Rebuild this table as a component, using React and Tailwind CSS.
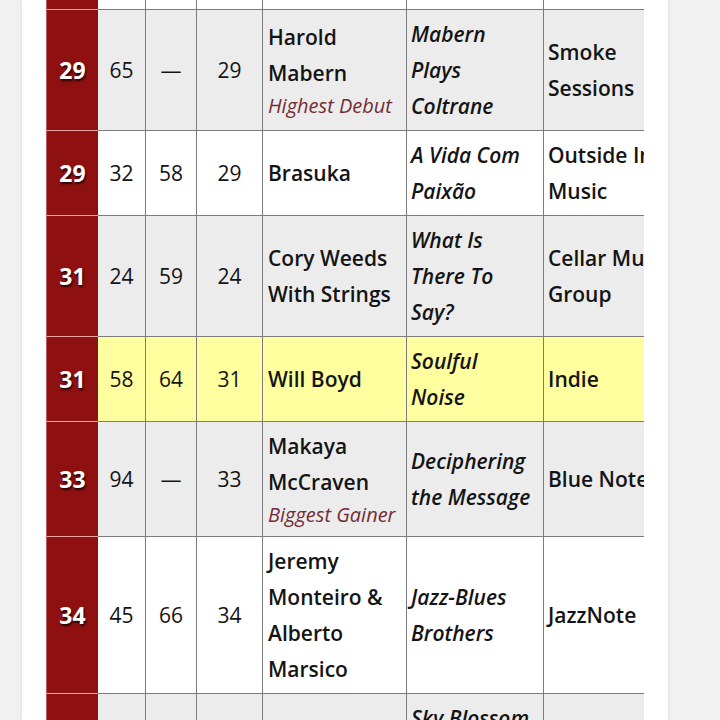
const ROWS = [
  {
    rank: '29', a: '65', b: '—', c: '29', bg: 'bg-[#ececec]',
    artist: ['Harold', 'Mabern'], note: 'Highest Debut',
    title: ['Mabern', 'Plays', 'Coltrane'],
    label: ['Smoke', 'Sessions'],
  },
  {
    rank: '29', a: '32', b: '58', c: '29', bg: 'bg-white',
    artist: ['Brasuka'],
    title: ['A Vida Com', 'Paixão'],
    label: ['Outside In', 'Music'],
  },
  {
    rank: '31', a: '24', b: '59', c: '24', bg: 'bg-[#ececec]',
    artist: ['Cory Weeds', 'With Strings'],
    title: ['What Is', 'There To', 'Say?'],
    label: ['Cellar Music', 'Group'],
  },
  {
    rank: '31', a: '58', b: '64', c: '31', bg: 'bg-[#ffff9f]',
    artist: ['Will Boyd'],
    title: ['Soulful', 'Noise'],
    label: ['Indie'],
  },
  {
    rank: '33', a: '94', b: '—', c: '33', bg: 'bg-[#ececec]',
    artist: ['Makaya', 'McCraven'], note: 'Biggest Gainer',
    title: ['Deciphering', 'the Message'],
    label: ['Blue Note Records'],
  },
  {
    rank: '34', a: '45', b: '66', c: '34', bg: 'bg-white',
    artist: ['Jeremy', 'Monteiro &', 'Alberto', 'Marsico'],
    title: ['Jazz-Blues', 'Brothers'],
    label: ['JazzNote'],
  },
  {
    rank: '36', a: '—', b: '—', c: '36', bg: 'bg-[#ececec]',
    artist: ['Chris Potter'],
    title: ['Sky Blossom', 'Eagle'],
    label: ['Edition'],
  },
]

const cell = 'flex items-center border-r border-b border-[#7c7c7c] py-[6px]'

function Row({ r }) {
  return (
    <div className="flex">
      <div className="w-[52px] shrink-0 flex items-center justify-center bg-[#8f1010] border-l border-l-[#c25a5a] border-b border-b-[#eba3a3] text-white font-bold text-[23px] [text-shadow:1px_2px_2px_rgba(0,0,0,0.75)]">
        {r.rank}
      </div>
      <div className={`${cell} ${r.bg} w-[48px] shrink-0 justify-center`}>{r.a}</div>
      <div className={`${cell} ${r.bg} w-[51px] shrink-0 justify-center`}>{r.b}</div>
      <div className={`${cell} ${r.bg} w-[66px] shrink-0 justify-center`}>{r.c}</div>
      <div className={`${cell} ${r.bg} w-[144px] shrink-0 pl-[5px]`}>
        <div className="font-semibold whitespace-nowrap">
          {r.artist.map(t => <div key={t}>{t}</div>)}
          {r.note && (
            <div className="font-normal italic text-[20px] leading-[30px] text-[#742c35]">{r.note}</div>
          )}
        </div>
      </div>
      <div className={`${cell} ${r.bg} w-[137px] shrink-0 pl-[4px]`}>
        <div className="font-semibold italic whitespace-nowrap">
          {r.title.map(t => <div key={t}>{t}</div>)}
        </div>
      </div>
      <div className={`${cell} ${r.bg} w-[170px] shrink-0 pl-[4px] border-r-0`}>
        <div className="font-semibold whitespace-nowrap">
          {r.label.map(t => <div key={t}>{t}</div>)}
        </div>
      </div>
    </div>
  )
}

export default function App() {
  return (
    <div className="w-[720px] h-[720px] overflow-hidden bg-[#f1f1f1] flex font-['Open_Sans',sans-serif] text-[21px] leading-[36px] text-[#141414]">
      <div className="ml-[22px] w-[646px] h-full bg-white px-[24px] shadow-[0_0_3px_rgba(0,0,0,0.12)]">
        <div className="w-[598px] overflow-hidden">
          <div className="w-max">
            {/* tail of the row above the viewport */}
            <div className="flex h-[10px]">
              <div className="w-[52px] bg-[#8f1010] border-l border-l-[#c25a5a] border-b border-b-[#eba3a3]" />
              <div className="w-[48px] border-r border-b border-[#7c7c7c] bg-white" />
              <div className="w-[51px] border-r border-b border-[#7c7c7c] bg-white" />
              <div className="w-[66px] border-r border-b border-[#7c7c7c] bg-white" />
              <div className="w-[144px] border-r border-b border-[#7c7c7c] bg-white" />
              <div className="w-[137px] border-r border-b border-[#7c7c7c] bg-white" />
              <div className="w-[170px] border-b border-[#7c7c7c] bg-white" />
            </div>
            {ROWS.map((r, i) => <Row key={i} r={r} />)}
          </div>
        </div>
      </div>
    </div>
  )
}
